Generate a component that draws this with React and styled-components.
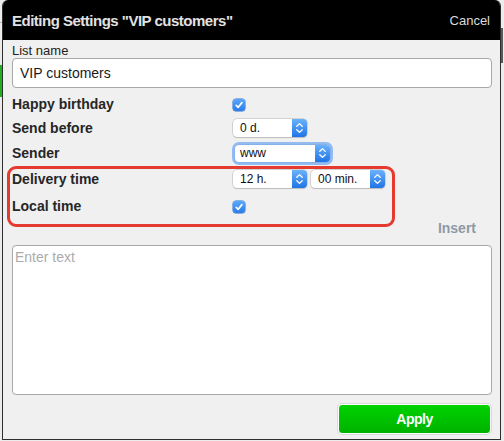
import React from "react";
import styled, { createGlobalStyle } from "styled-components";

const Global = createGlobalStyle`
  html, body { margin: 0; padding: 0; }
  body {
    width: 504px;
    height: 441px;
    overflow: hidden;
    font-family: "Liberation Sans", Arial, Helvetica, sans-serif;
    background:
      linear-gradient(#22b022, #22b022) 0 65px / 2px 32px no-repeat,
      linear-gradient(#bbbbbb, #bbbbbb) 0 22px / 2px 1px no-repeat,
      linear-gradient(#5a5a5a, #5a5a5a) 501px 28px / 2px 35px no-repeat,
      #ececec;
  }
  * { box-sizing: border-box; }
`;

const Dialog = styled.div`
  margin-left: 2px;
  width: 499px;
  background: #f0f0f0;
  border: 1px solid #2e2e2e;
  border-top: 0;
  border-radius: 6px 6px 0 0;
  overflow: hidden;
  display: flex;
  flex-direction: column;
`;

const Header = styled.div`
  height: 40px;
  background: #000;
  display: flex;
  align-items: center;
  justify-content: space-between;
  padding: 0 10px 0 9px;
`;

const Title = styled.div`
  color: #e2e2e2;
  font-size: 15px;
  font-weight: bold;
  letter-spacing: -0.5px;
`;

const Cancel = styled.div`
  color: #dcdcdc;
  font-size: 13px;
`;

const Body = styled.div`
  padding: 3px 8px 5px 9px;
  display: flex;
  flex-direction: column;
`;

const FieldLabel = styled.div`
  font-size: 13px;
  line-height: 15px;
  color: #222;
`;

const TextInput = styled.div`
  height: 30px;
  background: #fff;
  border: 1px solid #a8a8a8;
  border-radius: 4px;
  padding: 0 7px;
  display: flex;
  align-items: center;
  font-size: 14px;
  color: #1a1a1a;
`;

const Row = styled.div`
  display: flex;
  align-items: center;
  height: 20px;
  margin-top: ${(p) => p.$mt}px;
`;

const RowLabel = styled.div`
  width: 221px;
  flex: none;
  font-size: 14px;
  font-weight: bold;
  color: #262626;
`;

const Controls = styled.div`
  display: flex;
  align-items: center;
  gap: 4px;
`;

const Group = styled.div`
  position: relative;
  margin-top: ${(p) => p.$mt}px;
  &::after {
    content: "";
    position: absolute;
    top: -3px;
    right: 97px;
    bottom: -11px;
    left: -5px;
    border: 3px solid #e53a2f;
    border-radius: 9px;
    pointer-events: none;
  }
`;

const CheckBox = styled.div`
  width: 12px;
  height: 12px;
  border-radius: 3px;
  background: linear-gradient(#5aa8fa, #2a7ce9);
  box-shadow: 0 0 0 0.5px #2a6fcf;
  display: flex;
  align-items: center;
  justify-content: center;
  margin-top: 1px;
`;

const SelectBox = styled.div`
  width: ${(p) => p.$w}px;
  height: ${(p) => (p.$focus ? 17 : 18)}px;
  margin-left: ${(p) => (p.$focus ? 2 : 0)}px;
  display: flex;
  background: #fff;
  border-radius: 4px;
  box-shadow: ${(p) =>
    p.$focus
      ? "0 0 0 0.5px #7aa7e6, 0 0 0 3px rgba(118, 170, 240, 0.75)"
      : "0 0 0 0.5px #b5b5b5, 0 1px 1px rgba(0,0,0,0.18)"};
  overflow: hidden;
`;

const SelectText = styled.div`
  flex: 1;
  display: flex;
  align-items: center;
  padding-left: ${(p) => (p.$focus ? 5 : 7)}px;
  font-size: 12px;
  color: #111;
`;

const SelectArrow = styled.div`
  width: 15px;
  flex: none;
  background: linear-gradient(#6bb2fb, #1f74e6);
  display: flex;
  align-items: center;
  justify-content: center;
`;

const InsertRow = styled.div`
  margin-top: 4px;
  display: flex;
  justify-content: flex-end;
  padding-right: 16px;
  font-size: 14px;
  line-height: 16px;
  font-weight: bold;
  color: #8d9aa6;
`;

const TextArea = styled.div`
  margin-top: 9px;
  height: 150px;
  background: #fff;
  border: 1px solid #a8a8a8;
  border-radius: 4px;
  padding: 3px 2px;
  font-size: 14px;
  line-height: 16px;
  color: #ababab;
`;

const Footer = styled.div`
  margin-top: 9px;
  display: flex;
  justify-content: flex-end;
  padding-right: 1px;
`;

const ApplyButton = styled.div`
  width: 153px;
  height: 30px;
  border: 1px solid #fff;
  border-radius: 4px;
  box-shadow: 0 0 0 1px #dadada;
  background: linear-gradient(#00d200, #00b300);
  color: #fff;
  font-size: 14px;
  font-weight: bold;
  letter-spacing: -0.5px;
  display: flex;
  align-items: center;
  justify-content: center;
`;

const Check = () => (
  <svg width="10" height="10" viewBox="0 0 10 10">
    <path d="M2.2 5.3 L4.2 7.3 L7.9 2.6" fill="none" stroke="#fff" strokeWidth="1.7" strokeLinecap="round" strokeLinejoin="round" />
  </svg>
);

const Chevrons = () => (
  <svg width="9" height="14" viewBox="0 0 9 14">
    <path d="M1.8 5.2 L4.5 2.6 L7.2 5.2" fill="none" stroke="#fff" strokeWidth="1.3" strokeLinecap="round" strokeLinejoin="round" />
    <path d="M1.8 8.8 L4.5 11.4 L7.2 8.8" fill="none" stroke="#fff" strokeWidth="1.3" strokeLinecap="round" strokeLinejoin="round" />
  </svg>
);

const Select = ({ value, width, focus }) => (
  <SelectBox $w={width} $focus={focus}>
    <SelectText $focus={focus}>{value}</SelectText>
    <SelectArrow>
      <Chevrons />
    </SelectArrow>
  </SelectBox>
);

export default function App() {
  return (
    <>
      <Global />
      <Dialog>
        <Header>
          <Title>Editing Settings "VIP customers"</Title>
          <Cancel>Cancel</Cancel>
        </Header>
        <Body>
          <FieldLabel>List name</FieldLabel>
          <TextInput>VIP customers</TextInput>
          <Row $mt={6}>
            <RowLabel>Happy birthday</RowLabel>
            <CheckBox>
              <Check />
            </CheckBox>
          </Row>
          <Row $mt={4}>
            <RowLabel>Send before</RowLabel>
            <Select value="0 d." width={74} />
          </Row>
          <Row $mt={5}>
            <RowLabel>Sender</RowLabel>
            <Select value="www" width={95} focus />
          </Row>
          <Group $mt={6}>
            <Row $mt={0}>
              <RowLabel>Delivery time</RowLabel>
              <Controls>
                <Select value="12 h." width={74} />
                <Select value="00 min." width={74} />
              </Controls>
            </Row>
            <Row $mt={7}>
              <RowLabel>Local time</RowLabel>
              <CheckBox>
                <Check />
              </CheckBox>
            </Row>
          </Group>
          <InsertRow>Insert</InsertRow>
          <TextArea>Enter text</TextArea>
          <Footer>
            <ApplyButton>Apply</ApplyButton>
          </Footer>
        </Body>
      </Dialog>
    </>
  );
}
